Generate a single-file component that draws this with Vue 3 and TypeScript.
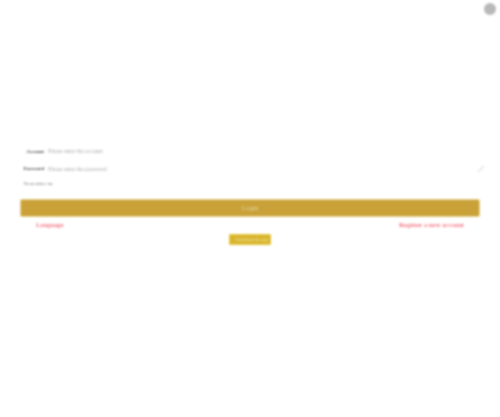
<script setup lang="ts">
const rows = [
  { label: 'Account', placeholder: 'Please enter the account', eye: false },
  { label: 'Password', placeholder: 'Please enter the password', eye: true },
]
</script>

<template>
  <div class="page">
    <header class="top">
      <span class="avatar"></span>
    </header>
    <main class="form">
      <div v-for="row in rows" :key="row.label" class="row">
        <label class="label">{{ row.label }}</label>
        <span class="placeholder">{{ row.placeholder }}</span>
        <svg v-if="row.eye" class="eye" viewBox="0 0 8 8" width="8" height="8">
          <path d="M1 7 7 1" stroke="#e4e4e4" stroke-width="1.4" fill="none" />
        </svg>
      </div>
      <div class="remember">Remember me</div>
      <button class="login" type="button">Login</button>
      <div class="links">
        <a class="link">Language</a>
        <a class="link">Register a new account</a>
      </div>
      <div class="extra">
        <button class="small" type="button"><span class="small-text">Download the app</span></button>
      </div>
    </main>
  </div>
</template>

<style scoped>
.page {
  width: 500px;
  height: 417px;
  background: #fff;
  font-family: "Liberation Serif", serif;
  filter: blur(0.9px);
  overflow: hidden;
  box-sizing: border-box;
}
.top {
  height: 142px;
  display: flex;
  justify-content: flex-end;
  padding: 3px 4px 0 0;
  box-sizing: border-box;
}
.avatar {
  width: 12px;
  height: 12px;
  border-radius: 50%;
  background: #b8b8b8;
}
.form {
  display: flex;
  flex-direction: column;
  padding: 0 20px;
}
.row {
  display: flex;
  align-items: center;
  height: 18px;
  font-size: 6px;
}
.row:nth-child(2) {
  height: 17px;
}
.label {
  width: 24px;
  text-align: right;
  margin-right: 4px;
  color: #444;
  font-size: 5px;
  font-weight: 700;
  white-space: nowrap;
}
.placeholder {
  color: #aaa;
  font-size: 5.7px;
  white-space: nowrap;
  flex: 1;
}
.eye {
  flex: none;
  margin-right: -5px;
}
.remember {
  height: 13px;
  line-height: 13px;
  font-size: 5px;
  color: #777;
  padding-left: 4px;
}
.login {
  margin-top: 9px;
  height: 18px;
  width: 460px;
  border: 1px solid #e6d48f;
  border-radius: 2px;
  background: #c9a138;
  color: #e6d9a8;
  font-family: inherit;
  font-size: 7px;
  padding: 0;
}
.links {
  display: flex;
  justify-content: space-between;
  padding: 0 16px;
  margin-top: 2px;
  height: 11px;
  align-items: center;
  font-size: 7px;
}
.link {
  color: #f0384c;
}
.extra {
  display: flex;
  justify-content: center;
  margin-top: 4px;
}
.small {
  width: 42px;
  height: 11px;
  border: 1px solid #e4c93f;
  border-radius: 1px;
  background: #d9b52f;
  padding: 0;
  display: flex;
  align-items: center;
  justify-content: flex-end;
  overflow: hidden;
}
.small-text {
  color: #f0e4a8;
  font-family: inherit;
  font-size: 4px;
  white-space: nowrap;
  padding-right: 2px;
}
</style>
